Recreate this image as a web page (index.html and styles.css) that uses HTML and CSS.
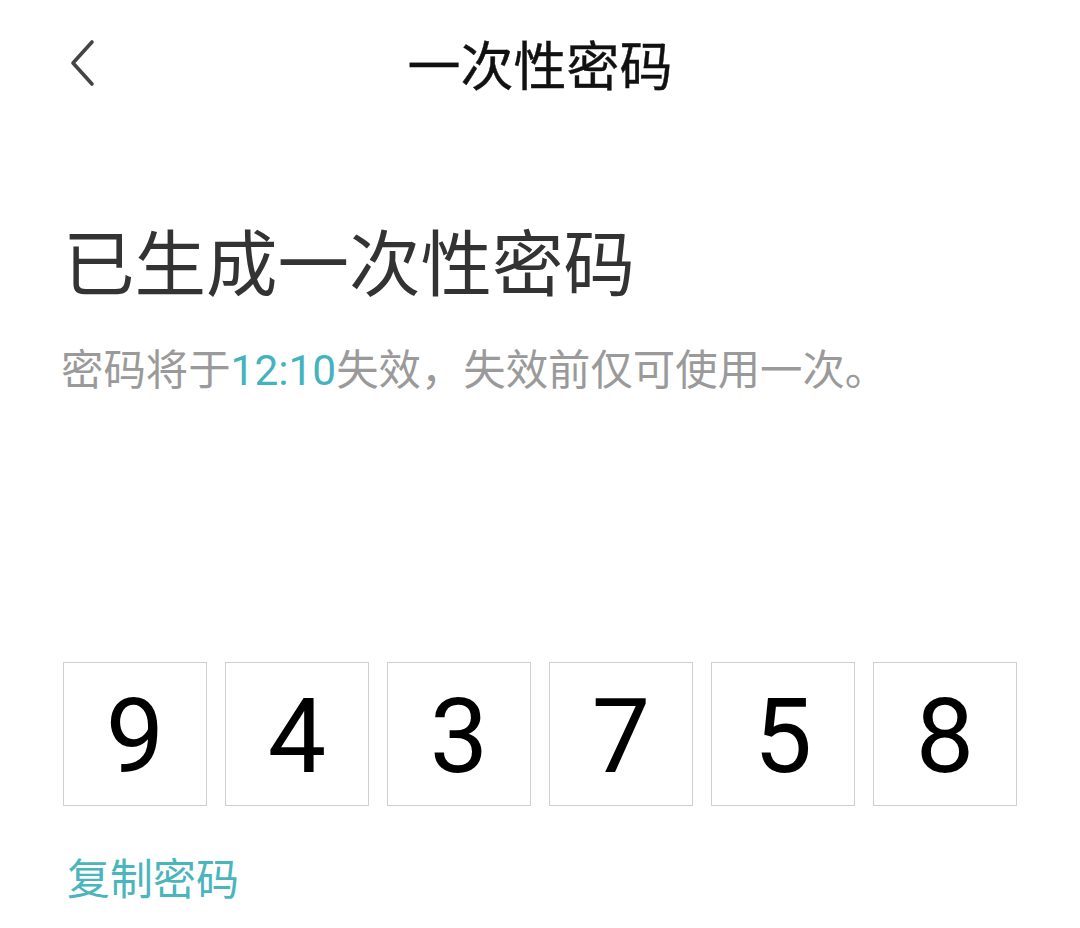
FILE: index.html
```html
<!DOCTYPE html>
<html lang="zh-CN">
<head>
<meta charset="utf-8">
<title>一次性密码</title>
<link rel="stylesheet" href="styles.css">
</head>
<body>
<div class="page">
  <header class="topbar">
    <button class="back" aria-label="返回">
      <svg width="40" height="60" viewBox="0 0 40 60"><path d="M32 10 L13 31 L32 52" fill="none" stroke="#444" stroke-width="3.6" stroke-linecap="round" stroke-linejoin="round"/></svg>
    </button>
    <h1 class="title">一次性密码</h1>
  </header>
  <main class="content">
    <h2 class="heading">已生成一次性密码</h2>
    <p class="desc">密码将于<span class="time">12:10</span>失效，失效前仅可使用一次。</p>
    <div class="code">
      <div class="digit">9</div>
      <div class="digit">4</div>
      <div class="digit">3</div>
      <div class="digit">7</div>
      <div class="digit">5</div>
      <div class="digit">8</div>
    </div>
    <a class="copy" href="#">复制密码</a>
  </main>
</div>
</body>
</html>
```
FILE: styles.css
```css
html, body {
  margin: 0;
  padding: 0;
  background: #fff;
}
body {
  font-family: "Noto Sans CJK SC", sans-serif;
  width: 1080px;
  height: 928px;
  overflow: hidden;
}
.page {
  display: flex;
  flex-direction: column;
}
.topbar {
  position: relative;
  height: 132px;
  display: flex;
  justify-content: center;
}
.back {
  position: absolute;
  left: 60px;
  top: 32px;
  width: 40px;
  height: 60px;
  padding: 0;
  border: 0;
  background: none;
}
.back svg { display: block; }
.title {
  margin: 0;
  font-size: 53px;
  font-weight: 400;
  line-height: 126px;
  height: 132px;
  color: #111;
  -webkit-text-stroke: 0.4px #111;
}
.content {
  padding-left: 63px;
  display: flex;
  flex-direction: column;
}
.heading {
  margin: 77px 0 0 0;
  font-size: 71.5px;
  font-weight: 400;
  line-height: 100px;
  color: #333;
}
.desc {
  margin: 28px 0 0 -2px;
  font-size: 42.4px;
  line-height: 60px;
  color: #9a9a9a;
}
.time {
  font-family: Roboto, sans-serif;
  color: #45b3bd;
}
.code {
  margin-top: 261px;
  display: flex;
  gap: 18px;
}
.digit {
  box-sizing: border-box;
  width: 144px;
  height: 144px;
  padding-top: 6px;
  border: 1px solid #cfcfcf;
  display: flex;
  align-items: center;
  justify-content: center;
  font-family: Roboto, sans-serif;
  font-size: 104px;
  line-height: 1;
  color: #000;
}
.copy {
  margin: 40px 0 0 4px;
  font-size: 43px;
  line-height: 60px;
  color: #4bb5be;
  text-decoration: none;
  align-self: flex-start;
}
```
